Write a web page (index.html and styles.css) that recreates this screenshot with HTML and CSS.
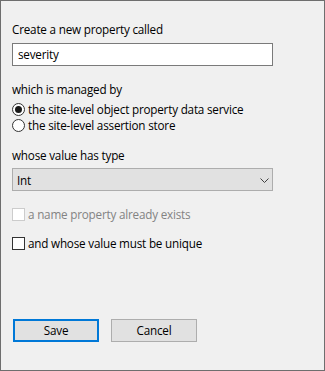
FILE: index.html
```html
<!DOCTYPE html>
<html>
<head>
<meta charset="utf-8">
<link rel="stylesheet" href="styles.css">
</head>
<body>
<div class="win">
  <div class="label first">Create a new property called</div>
  <div class="textbox">severity</div>
  <div class="label gap16">which is managed by</div>
  <div class="choice gap4"><span class="radio on"></span><span>the site-level object property data service</span></div>
  <div class="choice"><span class="radio"></span><span>the site-level assertion store</span></div>
  <div class="label gap15">whose value has type</div>
  <div class="select"><span>Int</span><svg class="chev" width="9" height="5" viewBox="0 0 9 5"><polyline points="0.5,0.5 4.5,4.5 8.5,0.5" fill="none" stroke="#404040" stroke-width="1"/></svg></div>
  <div class="choice disabled gap15"><span class="check"></span><span>a name property already exists</span></div>
  <div class="choice gap13"><span class="check"></span><span>and whose value must be unique</span></div>
  <div class="buttons">
    <div class="btn default">Save</div>
    <div class="btn">Cancel</div>
  </div>
</div>
</body>
</html>
```
FILE: styles.css
```css
html, body {
  margin: 0;
  padding: 0;
}
.win {
  box-sizing: border-box;
  width: 325px;
  height: 371px;
  border: 1px solid #6e6e6e;
  background: #f0f0f0;
  padding: 21px 0 0 11px;
  font-family: "Open Sans", "Noto Sans", sans-serif;
  font-size: 11.7px;
  letter-spacing: -0.2px;
  color: #000;
}
.label {
  height: 15px;
  line-height: 15px;
  white-space: nowrap;
}
.gap16 { margin-top: 16px; }
.gap15 { margin-top: 15px; }
.gap13 { margin-top: 13px; }
.gap4 { margin-top: 4px; }
.textbox {
  box-sizing: border-box;
  margin-top: 6px;
  width: 261px;
  height: 23px;
  border: 1px solid #7a7a7a;
  background: #fff;
  padding-left: 5px;
  line-height: 20px;
}
.choice {
  display: flex;
  align-items: center;
  height: 16px;
  white-space: nowrap;
}
.radio {
  box-sizing: border-box;
  width: 13px;
  height: 13px;
  border: 1px solid #333;
  border-radius: 50%;
  background: #fff;
  margin-right: 3px;
  display: flex;
  align-items: center;
  justify-content: center;
}
.radio.on::after {
  content: "";
  width: 7px;
  height: 7px;
  border-radius: 50%;
  background: #1a1a1a;
}
.check {
  box-sizing: border-box;
  width: 13px;
  height: 13px;
  border: 1px solid #333;
  background: #fff;
  margin-right: 3px;
}
.disabled { color: #838383; }
.disabled .check { border-color: #cccccc; }
.select {
  box-sizing: border-box;
  margin-top: 5px;
  width: 261px;
  height: 23px;
  border: 1px solid #adadad;
  background: #e1e1e1;
  display: flex;
  align-items: center;
  justify-content: space-between;
  padding: 0 3px 0 4px;
}
.chev { margin-top: 1px; }
.buttons {
  display: flex;
  gap: 12px;
  margin-top: 68px;
  margin-left: 1px;
}
.btn {
  box-sizing: border-box;
  width: 86px;
  height: 23px;
  border: 1px solid #adadad;
  background: #e1e1e1;
  text-align: center;
  line-height: 21px;
}
.btn.default {
  border: 2px solid #0078d7;
  line-height: 19px;
}
```
